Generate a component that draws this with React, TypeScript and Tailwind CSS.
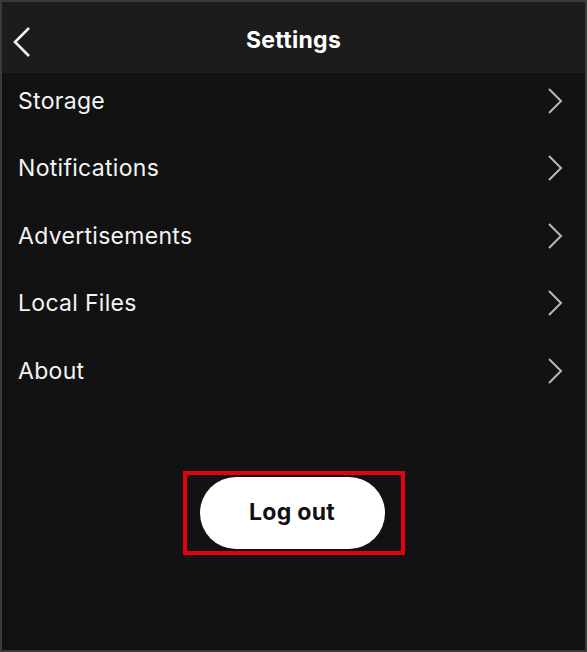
const items = ["Storage", "Notifications", "Advertisements", "Local Files", "About"];

function Chevron() {
  return (
    <svg width="16" height="28" viewBox="0 0 16 28" fill="none" className="text-[#b8b8b8]">
      <path d="M2 2L14 14L2 26" stroke="currentColor" strokeWidth="2" />
    </svg>
  );
}

export default function App() {
  return (
    <div
      className="w-[587px] h-[652px] bg-[#121212] border-2 border-[#3a3a3a] overflow-hidden flex flex-col text-white"
      style={{ fontFamily: "Inter, 'Noto Sans', sans-serif" }}
    >
      <header className="relative z-10 h-[71px] bg-[#1c1c1c] flex items-center justify-center shrink-0 pt-[6px]">
        <svg
          width="20"
          height="32"
          viewBox="0 0 20 32"
          fill="none"
          className="absolute left-[10px] top-[24px]"
        >
          <path d="M17 2L3 16L17 30" stroke="#f2f2f2" strokeWidth="2.6" />
        </svg>
        <h1 className="text-[23px] font-bold tracking-[0.3px]">Settings</h1>
      </header>

      <ul className="-mt-[6px]">
        {items.map((item) => (
          <li key={item} className="h-[67.5px] flex items-center justify-between pl-[16px] pr-[22px]">
            <span className="text-[23px] text-[#f4f4f4] tracking-[0.3px]">{item}</span>
            <Chevron />
          </li>
        ))}
      </ul>

      <div className="flex justify-center mt-[66px]">
        <div className="border-4 border-[#e4000f] pl-[13px] pr-[16px] py-[2px]">
          <button className="w-[185px] h-[72px] rounded-full bg-white text-[#111] text-[23px] font-bold tracking-[0.3px]">
            Log out
          </button>
        </div>
      </div>
    </div>
  );
}
